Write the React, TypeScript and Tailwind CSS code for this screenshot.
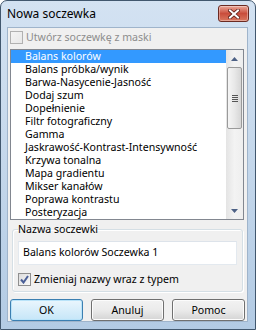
import React from "react";

const items = [
  "Balans kolorów",
  "Balans próbka/wynik",
  "Barwa-Nasycenie-Jasność",
  "Dodaj szum",
  "Dopełnienie",
  "Filtr fotograficzny",
  "Gamma",
  "Jaskrawość-Kontrast-Intensywność",
  "Krzywa tonalna",
  "Mapa gradientu",
  "Mikser kanałów",
  "Poprawa kontrastu",
  "Posteryzacja",
];

function CloseBtn() {
  return (
    <div className="mt-[4px] mr-[6px] w-[31px] h-[17px] rounded-[3px] border border-[#6b2a22] bg-gradient-to-b from-[#eaa79a] via-[#c94d3c] to-[#d9775f] flex items-center justify-center shadow-[inset_0_0_0_1px_rgba(255,255,255,0.35)]">
      <svg width="12" height="10" viewBox="0 0 12 10">
        <path d="M2 1.5 L10 8.5 M10 1.5 L2 8.5" stroke="#5a1d16" strokeWidth="3.6" strokeLinecap="square" />
        <path d="M2 1.5 L10 8.5 M10 1.5 L2 8.5" stroke="#ffffff" strokeWidth="2" strokeLinecap="square" />
      </svg>
    </div>
  );
}

function Button({ label, def }: { label: string; def?: boolean }) {
  return (
    <div
      className={
        "w-[73px] h-[22px] rounded-[3px] border flex items-center justify-center " +
        (def
          ? "border-[#3c7fb1] bg-gradient-to-b from-[#eaf6fd] to-[#c6e6f8] shadow-[inset_0_0_0_1px_#b9e3f9]"
          : "border-[#707070] bg-gradient-to-b from-[#f2f2f2] via-[#ebebeb] to-[#d4d4d4] shadow-[inset_0_0_0_1px_#fcfcfc]")
      }
    >
      <span className="leading-[13px]">{label}</span>
    </div>
  );
}

export default function App() {
  return (
    <div className="w-[256px] h-[330px] font-['Noto_Sans',sans-serif] text-[10.6px] text-black">
      <div className="w-full h-full rounded-t-[7px] border border-[#41576e] bg-gradient-to-b from-[#d3e2f2] via-[#c4d7eb] to-[#b3cbe4] flex flex-col">
        <div className="h-[26px] flex items-start justify-between shrink-0">
          <span className="pl-[6px] pt-[5px] leading-[16px] text-[12px]">Nowa soczewka</span>
          <CloseBtn />
        </div>
        <div className="ml-[6px] mr-[7px] mb-[7px] flex-1 border border-[#9fb4cb] bg-[#f0f0f0] flex flex-col">
          {/* disabled checkbox */}
          <div className="flex items-center h-[13px] mt-[3px] ml-[2px]">
            <div className="w-[13px] h-[13px] border border-[#b1b1b1] bg-gradient-to-br from-[#f4f4f4] to-[#e8e8e8]" />
            <span className="ml-[3px] text-[#8d8d8d] leading-[13px]">Utwórz soczewkę z maski</span>
          </div>
          {/* list */}
          <div className="mt-[5px] ml-[2px] w-[234px] h-[171px] border border-[#828790] bg-white flex overflow-hidden">
            <div className="flex-1 flex flex-col overflow-hidden">
              {items.map((it, i) => (
                <div
                  key={it}
                  className={
                    "h-[13px] shrink-0 pl-[14px] leading-[13px] whitespace-nowrap " +
                    (i === 0 ? "bg-[#3399ff] text-white" : "text-black")
                  }
                >
                  {it}
                </div>
              ))}
            </div>
            <div className="w-[17px] shrink-0 bg-gradient-to-r from-[#e4e4e4] via-[#f3f3f3] to-[#eeeeee] flex flex-col items-center">
              <div className="h-[17px] w-full flex items-center justify-center">
                <svg width="7" height="4" viewBox="0 0 7 4"><path d="M0 4 L3.5 0 L7 4 Z" fill="#4d6185" /></svg>
              </div>
              <div className="w-[15px] h-[62px] rounded-[2px] border border-[#9a9a9a] bg-gradient-to-r from-[#f5f5f5] via-[#e8e8e8] to-[#d6d6d6] flex flex-col items-center justify-center gap-[1px]">
                <div className="w-[6px] h-[1px] bg-[#555]" />
                <div className="w-[6px] h-[1px] bg-[#555]" />
                <div className="w-[6px] h-[1px] bg-[#555]" />
                <div className="w-[6px] h-[1px] bg-[#555]" />
              </div>
              <div className="flex-1" />
              <div className="h-[17px] w-full flex items-center justify-center">
                <svg width="7" height="4" viewBox="0 0 7 4"><path d="M0 0 L3.5 4 L7 0 Z" fill="#4d6185" /></svg>
              </div>
            </div>
          </div>
          {/* group */}
          <fieldset className="mt-[2px] ml-[4px] w-[231px] border border-[#d5dfe5] rounded-[3px] px-[5px] pb-[5px] shadow-[inset_1px_1px_0_#ffffff,1px_1px_0_#ffffff]">
            <legend className="ml-[0px] px-[0px] leading-[15px] text-black">Nazwa soczewki</legend>
            <div className="mt-[4px] h-[24px] w-[219px] bg-white border border-[#e3e9ef] border-t-[#dde3ea] flex items-center pl-[4px]">
              Balans kolorów Soczewka 1
            </div>
            <div className="mt-[8px] flex items-center h-[13px]">
              <div className="w-[13px] h-[13px] border border-[#8f8f8f] bg-gradient-to-br from-[#dcdcdc] to-[#fafafa] flex items-center justify-center">
                <svg width="9" height="9" viewBox="0 0 9 9"><path d="M1 4.5 L3.5 7.5 L8 1" stroke="#4a5f97" strokeWidth="2" fill="none" /></svg>
              </div>
              <span className="ml-[3px] leading-[13px]">Zmieniaj nazwy wraz z typem</span>
            </div>
          </fieldset>
          <div className="mt-[7px] ml-[2px] flex gap-[8px]">
            <Button label="OK" def />
            <Button label="Anuluj" />
            <Button label="Pomoc" />
          </div>
        </div>
      </div>
    </div>
  );
}
